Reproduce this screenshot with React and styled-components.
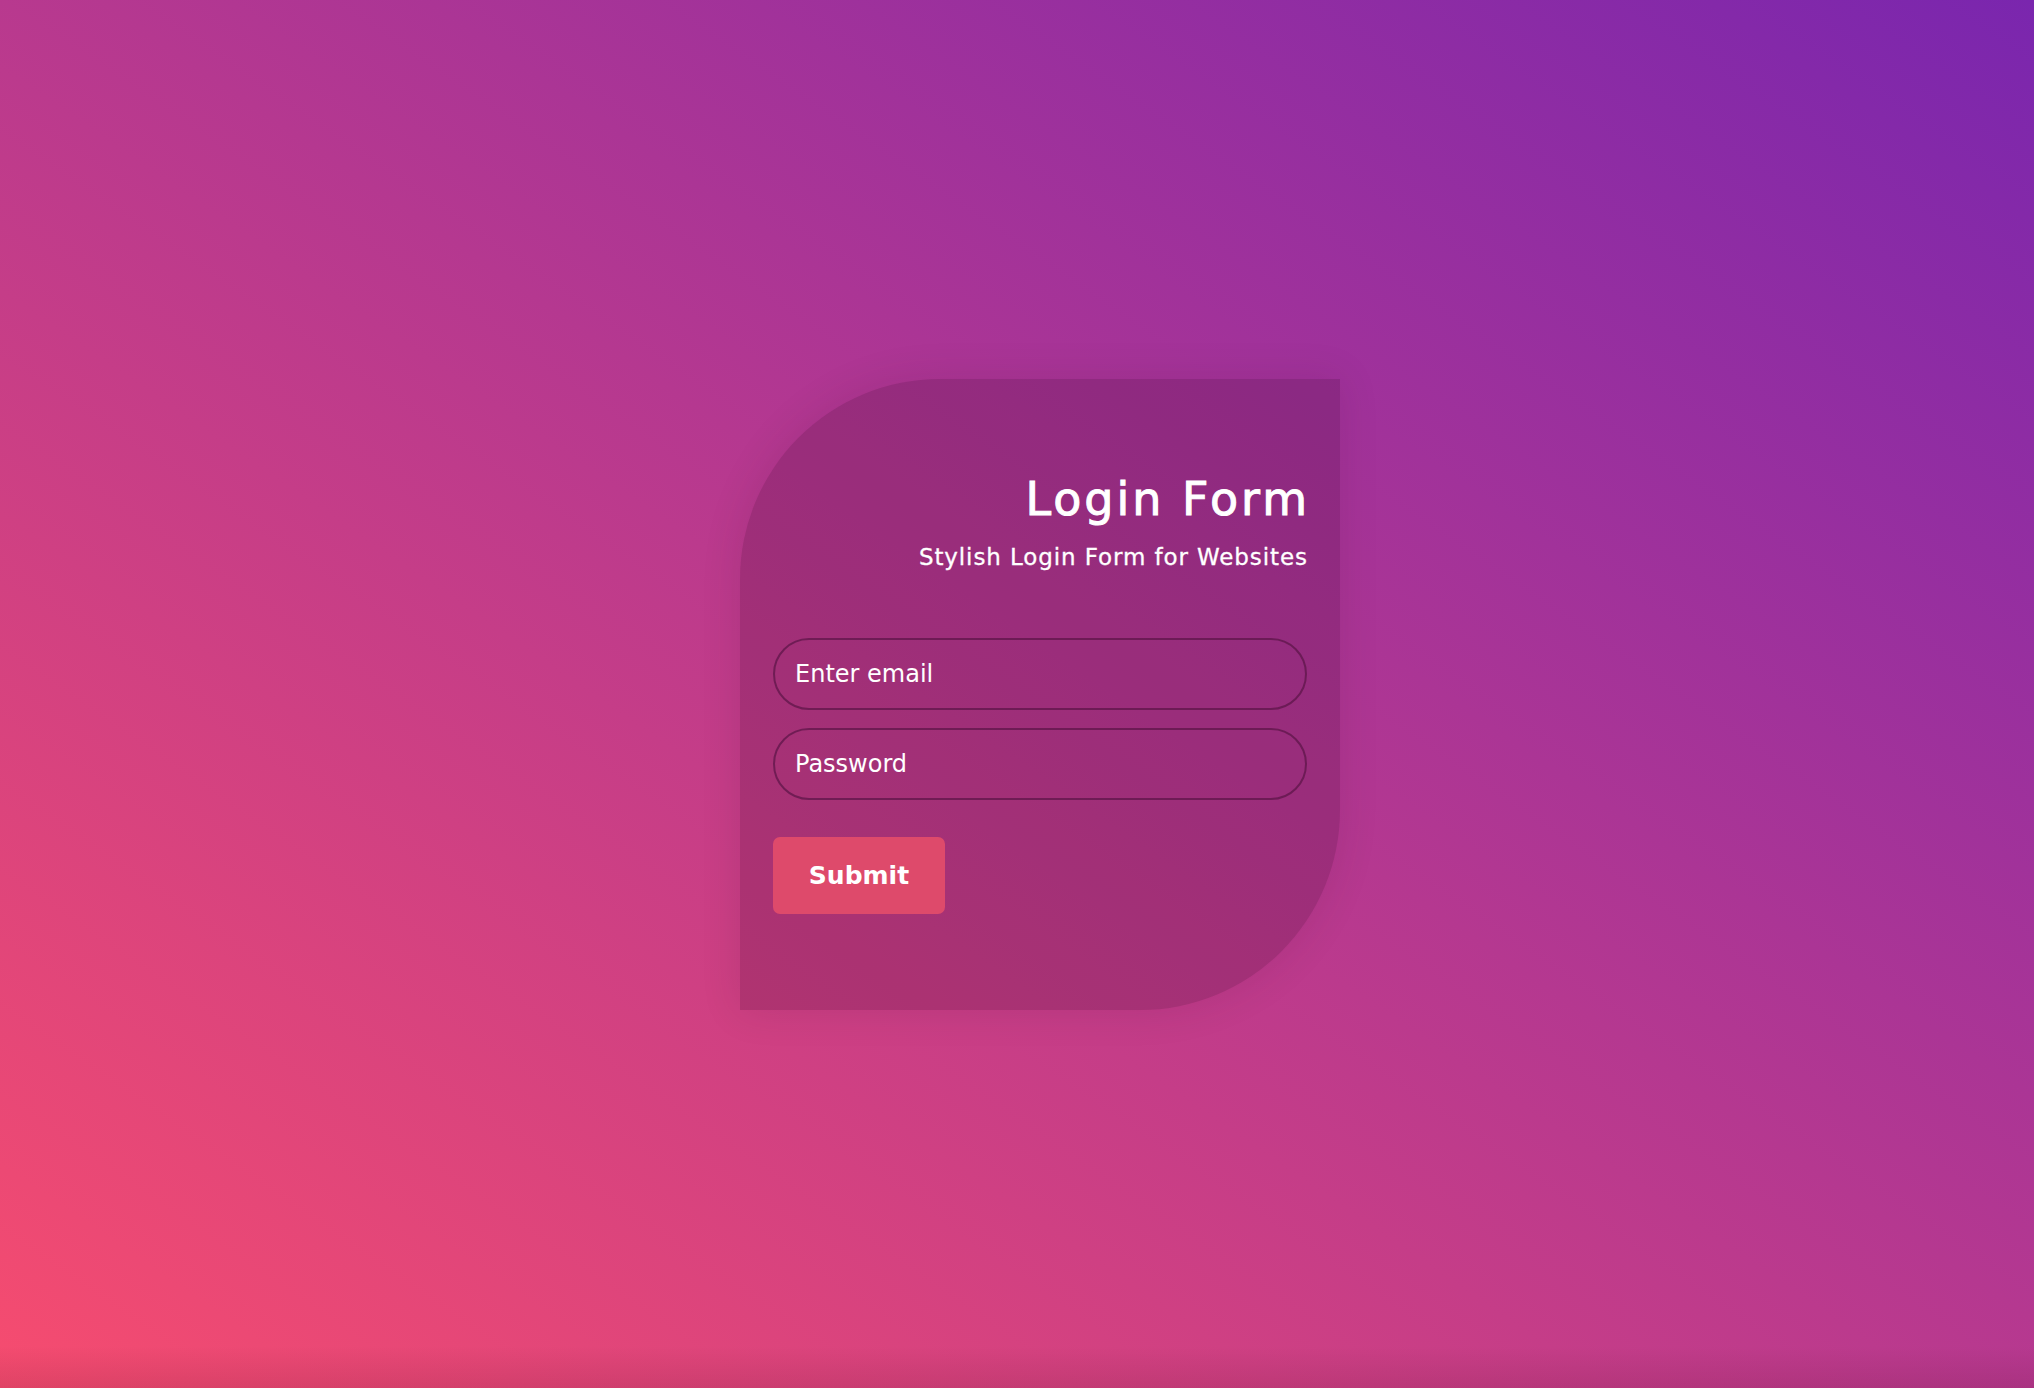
import styled, { createGlobalStyle } from 'styled-components'

const GlobalStyle = createGlobalStyle`
    html, body {
        margin: 0;
        padding: 0;
        height: 100%;
    }
    body {
        font-family: "DejaVu Sans", "Noto Sans", sans-serif;
        color: #fff;
    }
    #root {
        height: 100%;
    }
`

export default function App() {
    return (
        <Page>
            <GlobalStyle />
            <Card>
                <Header>
                    <Title>Login Form</Title>
                    <Subtitle>Stylish Login Form for Websites</Subtitle>
                </Header>
                <Form onSubmit={e => e.preventDefault()}>
                    <Input type="email" placeholder="Enter email" />
                    <Input type="password" placeholder="Password" />
                    <SubmitButton type="submit">Submit</SubmitButton>
                </Form>
            </Card>
        </Page>
    )
}

const Page = styled.div`
    position: relative;
    width: 100%;
    height: 100vh;
    display: flex;
    align-items: center;
    justify-content: center;
    padding-left: 46px;
    box-sizing: border-box;
    overflow: hidden;
    background: linear-gradient(to top right, #f64c6f, #7a26ae);

    &::after {
        content: '';
        position: absolute;
        left: 0;
        right: 0;
        bottom: 0;
        height: 42px;
        background: linear-gradient(to top, rgba(60, 0, 30, 0.12), rgba(60, 0, 30, 0));
        pointer-events: none;
    }
`
const Card = styled.div`
    width: 600px;
    height: 631px;
    box-sizing: border-box;
    padding: 92px 33px 0 33px;
    border-radius: 200px 0 200px 0;
    background-color: rgba(40, 0, 30, 0.18);
    box-shadow: 0 0 40px rgba(60, 0, 40, 0.12);
    display: flex;
    flex-direction: column;
`
const Header = styled.div`
    display: flex;
    flex-direction: column;
    align-items: flex-end;
    text-align: right;
`
const Title = styled.h1`
    margin: 0;
    font-size: 46px;
    line-height: 56px;
    font-weight: 400;
    letter-spacing: 3px;
    margin-right: -3px;
    -webkit-text-stroke: 1px #fff;
`
const Subtitle = styled.p`
    margin: 15px 0 0 0;
    font-size: 23px;
    line-height: 30px;
    letter-spacing: 0.9px;
    margin-right: -0.9px;
    -webkit-text-stroke: 0.3px #fff;
`
const Form = styled.form`
    display: flex;
    flex-direction: column;
    align-items: flex-start;
    gap: 18px;
    margin-top: 66px;
`
const Input = styled.input`
    width: 100%;
    height: 72px;
    box-sizing: border-box;
    padding: 0 20px;
    border: 2px solid rgba(90, 20, 70, 0.7);
    border-radius: 36px;
    background: transparent;
    color: #fff;
    font-family: "DejaVu Sans", sans-serif;
    font-size: 24px;
    outline: none;

    &::placeholder {
        color: #fff;
        opacity: 1;
    }
`
const SubmitButton = styled.button`
    margin-top: 19px;
    width: 172px;
    height: 77px;
    border: none;
    border-radius: 7px;
    background-color: #de4a6b;
    color: #fff;
    font-family: "DejaVu Sans", sans-serif;
    font-size: 25px;
    font-weight: 700;
    cursor: pointer;
`
